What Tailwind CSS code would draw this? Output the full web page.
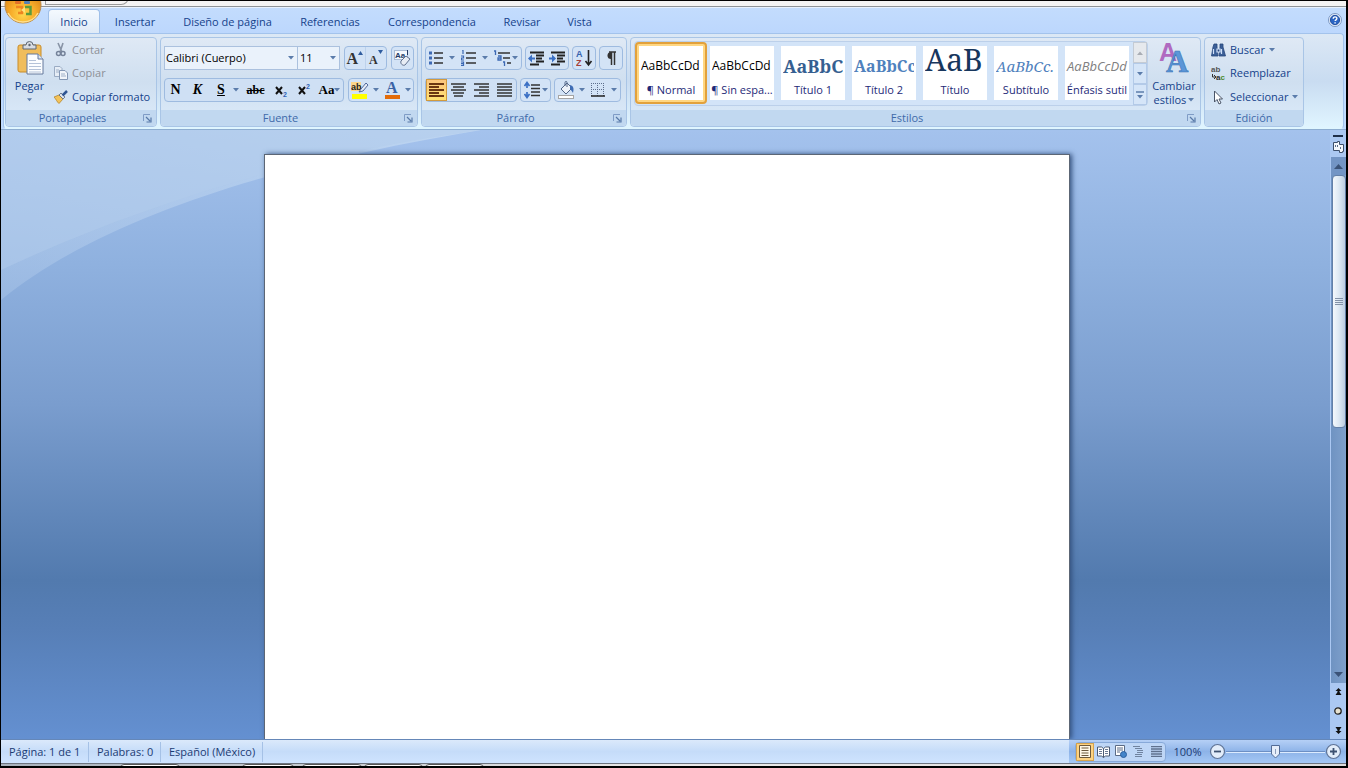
<!DOCTYPE html>
<html lang="es">
<head>
<meta charset="utf-8">
<title>Documento</title>
<script src="https://cdn.jsdelivr.net/npm/@tailwindcss/browser@4"></script>
</head>
<body class="h-screen overflow-hidden bg-black pt-px pr-0.5 pb-0.5 pl-px font-['Open_Sans','Noto_Sans',sans-serif] text-[11px] leading-4 text-[#15428b]">
<svg class="hidden">
  <defs>
    <symbol id="arrow" viewBox="0 0 6 4"><path d="M0 0h6L3 3.5z" fill="#5b7cab"/></symbol>
    <symbol id="launcher" viewBox="0 0 9 9"><path d="M.5 7V.5H7" fill="none" stroke="#7f9cc6"/><path d="M3 3l4 4M8 3.5V8H3.500" fill="none" stroke="#5879a8" stroke-width="1.200"/></symbol>
  </defs>
</svg>
<div class="flex h-full flex-col overflow-hidden bg-[#bfdbff]">

  <!-- Title strip -->
  <div class="relative z-10 h-1.5 shrink-0 border-b border-[#8f9397] bg-[#f4f3f3]">
    <div class="absolute left-11 -top-1 h-2 w-[84px] rounded-br-lg border border-[#9a9a9a] bg-[#f6f4f4]"></div>
    <button aria-label="Botón de Office" class="absolute left-0.5 top-0">
      <svg width="40" height="25" viewBox="0 0 40 25">
        <defs><radialGradient id="orb" cx=".5" cy=".75" r=".6"><stop offset="0" stop-color="#ffd94e"/><stop offset=".55" stop-color="#f8ae2b"/><stop offset="1" stop-color="#e08c1c"/></radialGradient></defs>
        <circle cx="20" cy="4" r="18" fill="url(#orb)" stroke="#b98a4c"/>
        <path d="M5 12a17 17 0 0 0 30 0" fill="none" stroke="#ffdf8e" stroke-width="1.500"/>
        <rect x="12" y="0" width="6" height="3" rx="1" fill="#e0702b"/>
        <rect x="21" y="0" width="6" height="3" rx="1" fill="#5580b4"/>
        <path d="M13 6h6v6h-4" fill="none" stroke="#ee8420" stroke-width="2.500"/>
        <path d="M22 6h5.500v7H23" fill="none" stroke="#5d9b3c" stroke-width="2.500"/>
        <path d="M18 9l4-3v6z" fill="#fbe27c"/>
      </svg>
    </button>
  </div>

  <!-- Tabs -->
  <nav class="flex h-[26px] shrink-0 items-end border-t border-[#e8f1fd] bg-gradient-to-b from-[#c3dcfd] to-[#bcd7fd] pl-[47px] pt-0.5 pr-1">
    <button class="relative z-10 mr-0.5 h-6 w-[52px] rounded-t border border-b-0 border-[#9fbfe8] bg-gradient-to-b from-[#f4f9fe] to-[#dfeaf7]">Inicio</button>
    <button class="h-[22px] w-[66px]">Insertar</button>
    <button class="h-[22px] w-[119px]">Diseño de página</button>
    <button class="h-[22px] w-[86px]">Referencias</button>
    <button class="h-[22px] w-[118px]">Correspondencia</button>
    <button class="h-[22px] w-[62px]">Revisar</button>
    <button class="h-[22px] w-[53px]">Vista</button>
    <button aria-label="Ayuda" class="ml-auto mb-1.5">
      <svg width="14" height="14" viewBox="0 0 15 15"><circle cx="7.500" cy="7.500" r="7" fill="#e6effb" stroke="#7894c0"/><circle cx="7.500" cy="7.500" r="5" fill="#2a64c4" stroke="#1d4a9b"/><path d="M5.600 6.200c0-2.700 4-2.600 3.900-.2 0 1.300-1.900 1.300-1.900 2.700M7.600 9.800v1.400" fill="none" stroke="#fff" stroke-width="1.500"/></svg>
    </button>
  </nav>

  <!-- Ribbon -->
  <div class="shrink-0 border-b border-[#8eadd0] px-0.5">
  <div class="flex h-[96px] gap-[3px] rounded border border-[#a3c3ec] border-b-[#dff6ff] bg-gradient-to-b from-[#dce8f5] via-[#c9dcf1] to-[#e0f5ff] px-px pt-[3px] pb-px">

    <section class="flex w-[152px] shrink-0 flex-col rounded border border-[#a9c5e6] bg-gradient-to-b from-[#dfe9f5] via-[#cfdff0] to-[#dcebfa]">
      <div class="flex flex-1">
        <button class="flex w-[47px] flex-col items-center justify-start pt-[3px]">
          <svg width="30" height="36" viewBox="0 0 30 36" class="shrink-0">
            <rect x="3" y="4" width="23" height="27" rx="2" fill="#f0bd5c" stroke="#c98c29"/>
            <path d="M8 8V4h3a3.500 3.500 0 0 1 7 0h3v4z" fill="#d8dce2" stroke="#5c6674"/><circle cx="14.500" cy="4" r="1.200" fill="#5c6674"/>
            <path d="M12 13h11l5 5v15H12z" fill="#fbfdff" stroke="#64799c"/><path d="M23 13v5h5" fill="#dbe5f2" stroke="#64799c"/>
            <path d="M14 19.500h7M14 22.500h12M14 25.500h12M14 28.500h12M14 31h12" stroke="#b4c2d8"/>
          </svg>
          <span class="pt-px">Pegar</span>
          <svg class="mt-1 shrink-0" width="5" height="4"><use href="#arrow"/></svg>
        </button>
        <div class="flex flex-col pl-px">
          <button class="flex h-[23px] items-center gap-1 text-[#8d9097]"><svg width="14" height="15" viewBox="0 0 14 15"><path d="M4 1l4 9M9 1L6 10" stroke="#8894a6" stroke-width="1.600"/><circle cx="4.500" cy="11.500" r="2" fill="none" stroke="#75839a" stroke-width="1.500"/><circle cx="9" cy="11.500" r="2" fill="none" stroke="#75839a" stroke-width="1.500"/></svg>Cortar</button>
          <button class="flex h-6 items-center gap-1 text-[#8d9097]"><svg width="14" height="14" viewBox="0 0 14 14"><path d="M.5.500H6l2 2v8H.500z" fill="#e6edf6" stroke="#9aabc3"/><path d="M5.500 4.500H11l2.500 2.500v6.500h-8z" fill="#f1f5fa" stroke="#8397b5"/><path d="M7 8h4M7 10h5M2 4h3M2 6h3" stroke="#9fb0c8"/></svg>Copiar</button>
          <button class="flex h-6 items-center gap-1 whitespace-nowrap"><svg width="14" height="14" viewBox="0 0 14 14"><path d="M0 7l5-2 4 4-4 4.500C3 12 2 9 0 7z" fill="#f3c35a" stroke="#b5862e" stroke-width=".8"/><path d="M5 5l2-2 4 4-2 2z" fill="#dfe5ec" stroke="#56657d" stroke-width=".8"/><path d="M8.500 5.500L13 1" stroke="#2e5593" stroke-width="2.500"/></svg>Copiar formato</button>
        </div>
      </div>
      <footer class="flex h-4 items-center rounded-b bg-[#c1d8f0] pr-1 text-[#3e6aaa]"><h2 class="flex-1 pr-1 text-center">Portapapeles</h2><button aria-label="Opciones de Portapapeles"><svg width="9" height="9"><use href="#launcher"/></svg></button></footer>
    </section>

    <section class="flex w-[258px] shrink-0 flex-col rounded border border-[#a9c5e6] bg-gradient-to-b from-[#dfe9f5] via-[#cfdff0] to-[#dcebfa]">
      <div class="flex flex-1 flex-col gap-2 px-[3px] pt-2">
        <div class="flex h-6 gap-1">
          <div class="flex">
            <label class="relative flex"><select aria-label="Fuente" class="w-[134px] appearance-none border border-[#abc1de] bg-[#eaf2fb] pl-px text-black"><option>Calibri (Cuerpo)</option></select><svg class="absolute right-1 top-2.5" width="6" height="4"><use href="#arrow"/></svg></label>
            <label class="relative flex"><select aria-label="Tamaño" class="w-[42px] appearance-none border border-l-0 border-[#abc1de] bg-[#eaf2fb] pl-0.5 text-black"><option>11</option></select><svg class="absolute right-1 top-2.5" width="6" height="4"><use href="#arrow"/></svg></label>
          </div>
          <div class="flex w-[43px] rounded-sm border border-[#9ebbe0] bg-[#d3e3f6] font-['Liberation_Serif',serif] font-bold text-[#333]">
            <button aria-label="Agrandar fuente" class="flex w-1/2 items-center justify-center border-r border-[#bdd2ec] pt-0.5 text-[16px]">A<svg class="mb-3" width="5" height="4" viewBox="0 0 5 4"><path d="M0 4h5L2.500 0z" fill="#2f5c9f"/></svg></button>
            <button aria-label="Encoger fuente" class="flex w-1/2 items-center justify-center pt-1 text-[12px]">A<svg class="mb-4" width="5" height="4" viewBox="0 0 5 4"><path d="M0 0h5L2.500 4z" fill="#2f5c9f"/></svg></button>
          </div>
          <button aria-label="Borrar formato" class="flex w-[23px] items-center justify-center rounded-sm border border-[#9ebbe0] bg-[#d3e3f6]"><svg width="17" height="18" viewBox="0 0 17 18"><rect x=".5" y="1.500" width="13" height="9" fill="#f4f8fd" stroke="#a9bbd4"/><text x="1" y="9" class="font-['Liberation_Sans']" font-size="8" font-weight="bold" fill="#223a66">Aa</text><path d="M13.500 1v5" stroke="#223a66"/><path d="M7 12l5-5 4 3-5 6c-2 1-5-1-4-4z" fill="#e8edf5" stroke="#60718f"/></svg></button>
        </div>
        <div class="flex h-6 gap-1">
          <div class="flex w-[180px] items-center rounded-sm border border-[#9ebbe0] bg-[#cfe0f4] font-['Liberation_Serif',serif] text-[14px] font-bold text-black">
            <button class="w-[21px]">N</button>
            <button class="w-[23px] italic">K</button>
            <button class="w-[24px] underline">S</button>
            <button aria-label="Estilos de subrayado" class="w-2"><svg width="6" height="4"><use href="#arrow"/></svg></button>
            <button class="w-[29px] text-[12px] line-through">abc</button>
            <button aria-label="Subíndice" class="w-[21px]"><svg class="mx-auto" width="14" height="15" viewBox="0 0 14 15"><path d="M2 4l6 7M8 4l-6 7" stroke="#111" stroke-width="2"/><text x="9" y="14" class="font-['Liberation_Sans']" font-size="7" fill="#2f62b5">2</text></svg></button>
            <button aria-label="Superíndice" class="w-[25px]"><svg class="mx-auto" width="14" height="15" viewBox="0 0 14 15"><path d="M2 4l6 7M8 4l-6 7" stroke="#111" stroke-width="2"/><text x="9" y="6" class="font-['Liberation_Sans']" font-size="7" fill="#2f62b5">2</text></svg></button>
            <button class="flex w-[27px] items-center justify-center text-[13px]">Aa<svg width="6" height="4" class="shrink-0"><use href="#arrow"/></svg></button>
          </div>
          <div class="flex w-[66px] items-center justify-around rounded-sm border border-[#9ebbe0] bg-[#d3e3f6]">
            <button aria-label="Color de resaltado" class="flex items-center gap-1"><svg width="18" height="18" viewBox="0 0 18 18"><rect x="0" y="1" width="10" height="9" fill="#fbd68c"/><text x="0" y="9" class="font-['Liberation_Sans']" font-size="9" font-weight="bold" fill="#222">ab</text><path d="M8 11l2-3 5-6 2 2-5 6z" fill="#e8edf6" stroke="#50689a"/><rect x="1" y="13" width="15" height="5" fill="#ff0"/></svg><svg width="6" height="4"><use href="#arrow"/></svg></button>
            <button aria-label="Color de fuente" class="flex items-center gap-1"><svg width="17" height="18" viewBox="0 0 17 18"><text x="2" y="12" class="font-['Liberation_Serif']" font-size="16" font-weight="bold" fill="#3a62a5">A</text><rect x="1" y="14" width="15" height="4" fill="#e36c0a"/></svg><svg width="6" height="4"><use href="#arrow"/></svg></button>
          </div>
        </div>
      </div>
      <footer class="flex h-4 items-center rounded-b bg-[#c1d8f0] pl-1 pr-1 text-[#3e6aaa]"><h2 class="flex-1 pr-2 text-center">Fuente</h2><button aria-label="Opciones de Fuente"><svg width="9" height="9"><use href="#launcher"/></svg></button></footer>
    </section>

    <section class="flex w-[206px] shrink-0 flex-col rounded border border-[#a9c5e6] bg-gradient-to-b from-[#dfe9f5] via-[#cfdff0] to-[#dcebfa]">
      <div class="flex flex-1 flex-col gap-2 px-[3px] pt-2">
        <div class="flex h-6 gap-[3px]">
          <div class="flex w-[98px] items-center justify-around rounded-sm border border-[#9ebbe0] bg-[#d3e3f6]">
            <button aria-label="Viñetas" class="flex items-center gap-1.5"><svg width="14" height="14" viewBox="0 0 14 14"><path d="M0 2h3M0 7h3M0 12h3" stroke="#3d69b4" stroke-width="3"/><path d="M5 2h9M5 7h9M5 12h9" stroke="#333" stroke-width="1.500"/></svg><svg width="6" height="4"><use href="#arrow"/></svg></button>
            <button aria-label="Numeración" class="flex items-center gap-1.5"><svg width="15" height="16" viewBox="0 0 15 16"><path d="M1 0h1v4M0 6h2.500v2H.5v2H3M0 12h2.500v3.500H0M0 13.700h2" fill="none" stroke="#3d69b4" stroke-width="1.200"/><path d="M5 3h10M5 8h10M5 13h10" stroke="#333" stroke-width="1.500"/></svg><svg width="6" height="4"><use href="#arrow"/></svg></button>
            <button aria-label="Lista multinivel" class="flex items-center"><svg width="18" height="16" viewBox="0 0 18 16"><path d="M0 1h1.500v4M4 6h3v4H4V8h3M9 12h1.500v4" fill="none" stroke="#3d69b4" stroke-width="1.300"/><path d="M4 3h12M9 8h7M13 13h4" stroke="#333" stroke-width="1.500"/></svg><svg width="6" height="4"><use href="#arrow"/></svg></button>
          </div>
          <div class="flex w-[45px] items-center justify-around rounded-sm border border-[#9ebbe0] bg-[#d3e3f6]">
            <button aria-label="Disminuir sangría"><svg width="17" height="15" viewBox="0 0 17 15"><path d="M2 1.500h14M8 4.500h8M8 7.500h6M8 10.500h8M2 13.500h9" stroke="#222" stroke-width="2"/><path d="M0 7.500l4-4v3h3v2H4v3z" fill="#3a6fc4"/></svg></button>
            <button aria-label="Aumentar sangría"><svg width="17" height="15" viewBox="0 0 17 15"><path d="M2 1.500h14M8 4.500h8M8 7.500h6M8 10.500h8M2 13.500h9" stroke="#222" stroke-width="2"/><path d="M7 7.500l-4-4v3H0v2h3v3z" fill="#3a6fc4"/></svg></button>
          </div>
          <button aria-label="Ordenar" class="flex w-[24px] items-center justify-center rounded-sm border border-[#9ebbe0] bg-[#d3e3f6]"><svg width="17" height="20" viewBox="0 0 17 20"><text x="0" y="9" class="font-['Liberation_Sans']" font-size="9" font-weight="bold" fill="#3562ad">A</text><text x="0" y="18" class="font-['Liberation_Sans']" font-size="9" font-weight="bold" fill="#a54038">Z</text><path d="M12.500 2v14M9.500 13l3 4 3-4" fill="none" stroke="#222" stroke-width="1.600"/></svg></button>
          <button aria-label="Mostrar todo" class="flex w-[24px] items-center justify-center rounded-sm border border-[#9ebbe0] bg-[#d3e3f6]"><svg width="12" height="14" viewBox="0 0 12 14"><path d="M6 1a3.500 3.500 0 0 0 0 7z" fill="#333"/><path d="M4 1h7M6.500 1v13M9.500 1v13" stroke="#333" stroke-width="1.500"/></svg></button>
        </div>
        <div class="flex h-6 gap-[3px]">
          <div class="flex w-[92px] items-center rounded-sm border border-[#9ebbe0] bg-[#cfe0f4]">
            <button aria-label="Alinear a la izquierda" class="flex h-full w-[21px] shrink-0 items-center justify-center border border-[#d19a3e] bg-gradient-to-b from-[#fbc57d] to-[#ffe071]"><svg width="15" height="14" viewBox="0 0 15 14"><path d="M0 1h15M0 4h10M0 7h15M0 10h10M0 13h15" stroke="#6b3512" stroke-width="1.800"/></svg></button>
            <button aria-label="Centrar" class="flex flex-1 justify-center"><svg width="15" height="14" viewBox="0 0 15 14"><path d="M0 1h15M2 4h11M0 7h15M2 10h11M3 13h9" stroke="#333" stroke-width="1.600"/></svg></button>
            <button aria-label="Alinear a la derecha" class="flex flex-1 justify-center"><svg width="15" height="14" viewBox="0 0 15 14"><path d="M0 1h15M5 4h10M0 7h15M5 10h10M0 13h15" stroke="#333" stroke-width="1.600"/></svg></button>
            <button aria-label="Justificar" class="flex flex-1 justify-center"><svg width="15" height="14" viewBox="0 0 15 14"><path d="M0 1h15M0 4h15M0 7h15M0 10h15M0 13h15" stroke="#333" stroke-width="1.600"/></svg></button>
          </div>
          <button aria-label="Interlineado" class="flex w-[31px] items-center justify-center gap-px rounded-sm border border-[#9ebbe0] bg-[#d3e3f6]"><svg width="17" height="18" viewBox="0 0 17 18"><path d="M3 2v5M3 11v5M.5 5L3 1.500 5.500 5M.5 13L3 16.500 5.500 13" fill="none" stroke="#3a6fc4" stroke-width="1.700"/><path d="M7 4h9M7 7.500h9M7 11h9M7 14.500h9" stroke="#333" stroke-width="1.500"/></svg><svg width="6" height="4"><use href="#arrow"/></svg></button>
          <div class="flex w-[67px] items-center justify-around rounded-sm border border-[#9ebbe0] bg-[#d3e3f6]">
            <button aria-label="Sombreado" class="flex items-center gap-1"><svg width="17" height="18" viewBox="0 0 17 18"><path d="M3 8l6-6 5 5-6 6z" fill="#edf2f9" stroke="#536788"/><path d="M7 5V1.500c0-1.500 2-1.500 2 0V6" fill="none" stroke="#536788"/><path d="M12 4c4 1 4 4 3 8-1-2-2-3-3-4z" fill="#3f6db5"/><rect x=".5" y="14.500" width="15" height="3" fill="#fff" stroke="#a5a5a5"/></svg><svg width="6" height="4"><use href="#arrow"/></svg></button>
            <button aria-label="Bordes" class="flex items-center gap-1.5"><svg width="14" height="14" viewBox="0 0 14 14"><path d="M0 .5h14M0 6.500h14M.5 0v13M6.500 0v13M12.500 0v13" stroke="#5d6e8c" stroke-dasharray="1 1"/><path d="M0 13h14" stroke="#222" stroke-width="1.500"/></svg><svg width="6" height="4"><use href="#arrow"/></svg></button>
          </div>
        </div>
      </div>
      <footer class="flex h-4 items-center rounded-b bg-[#c1d8f0] pl-1 pr-1 text-[#3e6aaa]"><h2 class="flex-1 pr-2 text-center">Párrafo</h2><button aria-label="Opciones de Párrafo"><svg width="9" height="9"><use href="#launcher"/></svg></button></footer>
    </section>

    <section class="flex w-[571px] shrink-0 flex-col rounded border border-[#a9c5e6] bg-gradient-to-b from-[#dfe9f5] via-[#cfdff0] to-[#dcebfa]">
      <div class="flex flex-1 items-start pl-[3px] pt-[3px]">
        <div class="flex h-[65px] rounded-sm border border-[#bcd0ea] bg-[#d3e4f8]">
          <div class="flex text-[#1e2a78]">
            <button class="h-[62px] w-[72px] rounded-sm border-2 border-[#e2a13c] bg-[#ffd783] p-0.5"><span class="flex h-full flex-col items-center bg-white px-0.5"><span class="flex h-9 w-full items-center overflow-hidden whitespace-nowrap pt-1 text-[12px] text-black">AaBbCcDd</span>¶ Normal</span></button>
            <button class="h-[62px] w-[71px] py-1 pl-[3px] pr-1"><span class="flex h-full flex-col items-center whitespace-nowrap bg-white px-0.5"><span class="flex h-9 w-full items-center overflow-hidden whitespace-nowrap pt-1 text-[12px] text-black">AaBbCcDd</span>¶ Sin espa...</span></button>
            <button class="h-[62px] w-[71px] py-1 pl-[3px] pr-1"><span class="flex h-full flex-col items-center bg-white px-0.5"><span class="flex h-9 w-full items-center overflow-hidden whitespace-nowrap pt-1 font-['Noto_Serif','Liberation_Serif',serif] text-[18px] font-bold text-[#365f91]">AaBbCc</span>Título 1</span></button>
            <button class="h-[62px] w-[71px] py-1 pl-[3px] pr-1"><span class="flex h-full flex-col items-center bg-white px-0.5"><span class="flex h-9 w-full items-center overflow-hidden whitespace-nowrap pt-1 font-['Noto_Serif','Liberation_Serif',serif] text-[16px] font-bold text-[#4f81bd]">AaBbCc</span>Título 2</span></button>
            <button class="h-[62px] w-[71px] py-1 pl-[3px] pr-1"><span class="flex h-full flex-col items-center bg-white px-0.5"><span class="flex h-9 w-full items-center overflow-hidden whitespace-nowrap pb-2 font-['Noto_Serif','Liberation_Serif',serif] text-[30px] text-[#17365d]">AaB</span>Título</span></button>
            <button class="h-[62px] w-[71px] py-1 pl-[3px] pr-1"><span class="flex h-full flex-col items-center bg-white px-0.5"><span class="flex h-9 w-full items-center overflow-hidden whitespace-nowrap pt-1 font-['Noto_Serif','Liberation_Serif',serif] text-[15px] italic text-[#4f81bd]">AaBbCc.</span>Subtítulo</span></button>
            <button class="h-[62px] w-[71px] py-1 pl-[3px] pr-1"><span class="flex h-full flex-col items-center whitespace-nowrap bg-white"><span class="flex h-9 w-full items-center overflow-hidden whitespace-nowrap px-0.5 pt-1 text-[13px] italic text-[#808080]">AaBbCcDd</span>Énfasis sutil</span></button>
          </div>
          <div class="flex w-3.5 flex-col">
            <button aria-label="Fila anterior" class="flex flex-1 items-center justify-center border border-[#c4cbd4] bg-[#e6e9ed]"><svg width="6" height="4" viewBox="0 0 6 4"><path d="M0 4h6L3 .5z" fill="#a9adb4"/></svg></button>
            <button aria-label="Fila siguiente" class="flex flex-1 items-center justify-center border border-[#b3cae8] bg-[#d5e5f8]"><svg width="6" height="4"><use href="#arrow"/></svg></button>
            <button aria-label="Más estilos" class="flex flex-1 items-center justify-center border border-[#b3cae8] bg-[#d5e5f8]"><svg width="8" height="8" viewBox="0 0 8 8"><path d="M0 1h8" stroke="#5b7cab" stroke-width="1.500"/><path d="M1 4h6L4 7.500z" fill="#5b7cab"/></svg></button>
          </div>
        </div>
        <button class="flex flex-1 flex-col items-center leading-[14px]">
          <svg width="30" height="34" viewBox="0 0 30 34"><text x="0" y="20" class="font-['Liberation_Sans']" font-size="25" font-weight="bold" fill="#b06ac0">A</text><text x="7" y="31" class="font-['Liberation_Serif']" font-size="31" font-weight="bold" fill="#5b96d8" stroke="#3a73b4" stroke-width=".6">A</text></svg>
          <span class="pt-1">Cambiar</span><span class="flex items-center gap-0.5">estilos<svg width="6" height="4"><use href="#arrow"/></svg></span>
        </button>
      </div>
      <footer class="flex h-4 items-center rounded-b bg-[#c1d8f0] pl-1 pr-1 text-[#3e6aaa]"><h2 class="flex-1 pr-2 text-center">Estilos</h2><button aria-label="Opciones de Estilos"><svg width="9" height="9"><use href="#launcher"/></svg></button></footer>
    </section>

    <section class="flex w-[100px] shrink-0 flex-col rounded border border-[#a9c5e6] bg-gradient-to-b from-[#dfe9f5] via-[#cfdff0] to-[#dcebfa]">
      <div class="flex flex-1 flex-col pl-1.5">
        <button class="flex h-[23px] items-center gap-1"><svg width="15" height="14" viewBox="0 0 15 14"><path d="M3 1h3v3l1 9H.5L2 4zM9 1h3v3l2.500 9H8l1-9z" fill="#3b5f97" stroke="#27467c" stroke-width=".8"/><path d="M6 6h3v3H6zM2.500 6v5M10.500 6v5" stroke="#cfe0f8" stroke-width="1.200" fill="#27467c"/></svg>Buscar<svg width="6" height="4"><use href="#arrow"/></svg></button>
        <button class="flex h-6 items-center gap-1"><svg width="15" height="18" viewBox="0 0 15 18"><text x="0" y="8" class="font-['Liberation_Sans']" font-size="8" font-weight="bold" fill="#555">ab</text><text x="5" y="16" class="font-['Liberation_Sans']" font-size="8" font-weight="bold" fill="#333">a<tspan fill="#4c8a2b">c</tspan></text><path d="M1.500 10v3h3M3 11l2 2-2 2" fill="none" stroke="#333"/></svg>Reemplazar</button>
        <button class="flex h-6 items-center gap-1"><svg width="15" height="15" viewBox="0 0 15 15"><path d="M3.500 1v11l2.500-2.500 2 4.500 2-1-2-4h3.500z" fill="#fff" stroke="#4a5568"/></svg>Seleccionar<svg width="6" height="4"><use href="#arrow"/></svg></button>
      </div>
      <footer class="h-4 rounded-b bg-[#c1d8f0] text-center text-[#3e6aaa]"><h2>Edición</h2></footer>
    </section>
  </div>
  </div>

  <!-- Workspace -->
  <div class="flex min-h-0 flex-1">
    <main class="relative flex flex-1 justify-center overflow-hidden bg-[linear-gradient(#a4c2ed_0%,#8fb1df_22%,#7a9dce_45%,#527aae_74%,#577fb7_82%,#6490d1_100%)] pl-[3px]">
      <svg class="absolute left-0 top-0" width="480" height="180" viewBox="0 0 480 180">
        <defs><linearGradient id="sw" x1="0" y1="1" x2="1" y2="0"><stop offset="0" stop-color="#b4cdec" stop-opacity=".35"/><stop offset="1" stop-color="#c4daf2" stop-opacity=".8"/></linearGradient></defs>
        <path d="M0 0H480C300 30 110 80 0 170z" fill="url(#sw)"/>
        <path d="M0 0H480C330 20 160 65 0 140z" fill="#b2cbec" fill-opacity=".5"/>
      </svg>
      <article contenteditable="true" aria-label="Página del documento" class="relative mt-6 w-[806px] border border-b-0 border-[#5c6675] bg-white shadow-[2px_0_5px_#33507d] outline-none"></article>
    </main>
    <aside class="flex w-4 flex-col items-center bg-[#abc8f2]">
      <button aria-label="Dividir" class="mt-[5px] h-0.5 w-2.5 shrink-0 bg-[#1f2f4a]"></button>
      <button aria-label="Regla" class="my-[3px] shrink-0"><svg width="13" height="14" viewBox="0 0 13 14"><path d="M1.500 2.500h4v-1h2v3h4v7h-1v1h-3v-2h-6z" fill="#f5f8fc" stroke="#3d4f6b"/><path d="M3.500 5v2M5.500 5v2M8.500 7v2" stroke="#5d6f8b"/></svg></button>
      <div class="flex min-h-0 w-full flex-1 flex-col items-center border-l border-[#abc8f2] bg-gradient-to-r from-[#6f93c2] to-[#7fa0cb]">
        <button aria-label="Arriba" class="flex h-[18px] w-full shrink-0 items-center justify-center bg-[#7395c5]"><svg width="9" height="5" viewBox="0 0 9 5"><path d="M0 5h9L4.500 0z" fill="#3b5378"/></svg></button>
        <div class="flex h-[253px] w-3.5 items-center justify-center rounded-sm border border-[#6480a8] bg-gradient-to-r from-[#f4f8fc] via-[#dde8f3] to-[#bccde1]"><svg width="8" height="8" viewBox="0 0 8 8"><path d="M0 .5h8M0 2.500h8M0 4.500h8M0 6.500h8" stroke="#8392a8"/></svg></div>
        <button aria-label="Abajo" class="mt-auto flex h-[17px] w-full shrink-0 items-center justify-center"><svg width="9" height="5" viewBox="0 0 9 5"><path d="M0 0h9L4.500 5z" fill="#3b5378"/></svg></button>
      </div>
      <div class="flex h-14 shrink-0 flex-col items-center justify-around">
        <button aria-label="Página anterior"><svg width="7" height="8" viewBox="0 0 7 8"><path d="M3.500 0L6.500 3H4.500V4L6.500 7H.5L2.500 4V3H.500z" fill="#111"/></svg></button>
        <button aria-label="Seleccionar objeto"><svg width="8" height="8" viewBox="0 0 8 8"><circle cx="4" cy="4" r="3.200" fill="#e8e2cf" stroke="#222" stroke-width="1.300"/></svg></button>
        <button aria-label="Página siguiente"><svg width="7" height="8" viewBox="0 0 7 8"><path d="M.5 1h6L4.500 4V5h2L3.500 8 .5 5h2V4z" fill="#111"/></svg></button>
      </div>
    </aside>
  </div>

  <!-- Status bar -->
  <footer class="flex h-6 shrink-0 items-center border-t border-[#6587b8] bg-gradient-to-b from-[#dbe9fb] via-[#c5dcf9] to-[#cfe4ff] text-[#1c3b73]">
    <button class="h-5 w-[88px] border-r border-[#a5c1e6] pl-2 text-left">Página: 1 de 1</button>
    <button class="h-5 w-[72px] border-r border-[#a5c1e6] pl-2 text-left">Palabras: 0</button>
    <button class="h-5 w-[102px] border-r border-[#a5c1e6] pl-2 text-left">Español (México)</button>
    <div class="ml-auto flex h-full items-center bg-gradient-to-b from-[#b5d0f6] via-[#8db3e8] to-[#a5c8f5] pl-1.5 pr-1">
      <div class="flex h-5 items-center rounded-sm border border-[#87a9d9] bg-[#bed6f6]">
        <button aria-label="Diseño de impresión" class="flex h-full w-[18px] items-center justify-center border border-[#d6a44e] bg-[#fdd383]"><svg width="12" height="13" viewBox="0 0 12 13"><path d="M.5.500h11v12H.5z" fill="#fff8e6" stroke="#6d5a3c"/><path d="M2.500 3h7M2.500 5.500h7M2.500 8h7M2.500 10.500h7" stroke="#6d5a3c"/></svg></button>
        <button aria-label="Lectura" class="flex w-[18px] justify-center"><svg width="13" height="12" viewBox="0 0 13 12"><path d="M.5 1h4l2 1.500L8.500 1h4v9h-4l-2 1.500L4.500 10h-4zM6.500 2.500v9" fill="#fff" stroke="#4b5b75"/><path d="M2 3.500h3M2 5.500h3M2 7.500h3M8 3.500h3M8 5.500h3M8 7.500h3" stroke="#6a7a94"/></svg></button>
        <button aria-label="Diseño web" class="flex w-[17px] justify-center"><svg width="12" height="13" viewBox="0 0 12 13"><path d="M.5.500h9v10h-9z" fill="#fff" stroke="#5b6b85"/><path d="M2 3h6M2 5h6M2 7h3" stroke="#5b6b85"/><circle cx="8.500" cy="9.500" r="3" fill="#4384c9" stroke="#2c5f9d"/></svg></button>
        <button aria-label="Esquema" class="flex w-[18px] justify-center"><svg width="11" height="11" viewBox="0 0 11 11"><path d="M0 .5h7M2 2.500h7M4 4.500h6M4 6.500h6M2 8.500h7M2 10.500h7" stroke="#70839f"/></svg></button>
        <button aria-label="Borrador" class="flex w-[18px] justify-center"><svg width="11" height="11" viewBox="0 0 11 11"><path d="M0 .5h11M0 3h11M0 5.500h11M0 8h11M0 10.500h11" stroke="#5f718e" stroke-width="1.300"/></svg></button>
      </div>
      <button class="w-[43px] text-center">100%</button>
      <button aria-label="Alejar"><svg width="17" height="17" viewBox="0 0 17 17"><circle cx="8.500" cy="8.500" r="7" fill="#e3edfa" stroke="#5e7396" stroke-width="1.200"/><path d="M5 8.500h7" stroke="#3d5170" stroke-width="1.800"/></svg></button>
      <label class="relative flex h-4 w-[99px] items-center">
        <input type="range" min="0" max="100" value="50" aria-label="Zoom" class="absolute inset-0 z-10 w-full opacity-0">
        <span class="h-0.5 w-full border-b border-[#dcebff] bg-[#6c8fc4]"></span>
        <svg class="absolute left-[45px] top-px" width="9" height="14" viewBox="0 0 9 14"><path d="M.5.500h8V9l-4 4-4-4z" fill="#e6eefa" stroke="#536c96"/><path d="M4.500 4v5" stroke="#8b9dbb"/></svg>
      </label>
      <button aria-label="Acercar"><svg width="17" height="17" viewBox="0 0 17 17"><circle cx="8.500" cy="8.500" r="7" fill="#e3edfa" stroke="#5e7396" stroke-width="1.200"/><path d="M5 8.500h7M8.500 5v7" stroke="#3d5170" stroke-width="1.800"/></svg></button>
    </div>
  </footer>
  <!-- Top edge of the taskbar -->
  <div class="flex h-[3px] shrink-0 gap-0.5 overflow-hidden border-t border-[#6d7480] bg-gradient-to-r from-[#a9b2bc] via-[#eceae9] to-[#dcdcdc] pl-[119px]">
    <div class="h-2 w-[60px] rounded-t border border-[#555] bg-white"></div>
    <div class="ml-[60px] h-2 w-[52px] rounded-t border border-[#555] bg-white"></div>
    <div class="ml-1.5 h-2 w-[60px] rounded-t border border-[#555] bg-white"></div>
    <div class="h-2 w-[59px] rounded-t border border-[#555] bg-white"></div>
    <div class="h-2 w-[59px] rounded-t border border-[#555] bg-white"></div>
  </div>
</div>
</body>
</html>
